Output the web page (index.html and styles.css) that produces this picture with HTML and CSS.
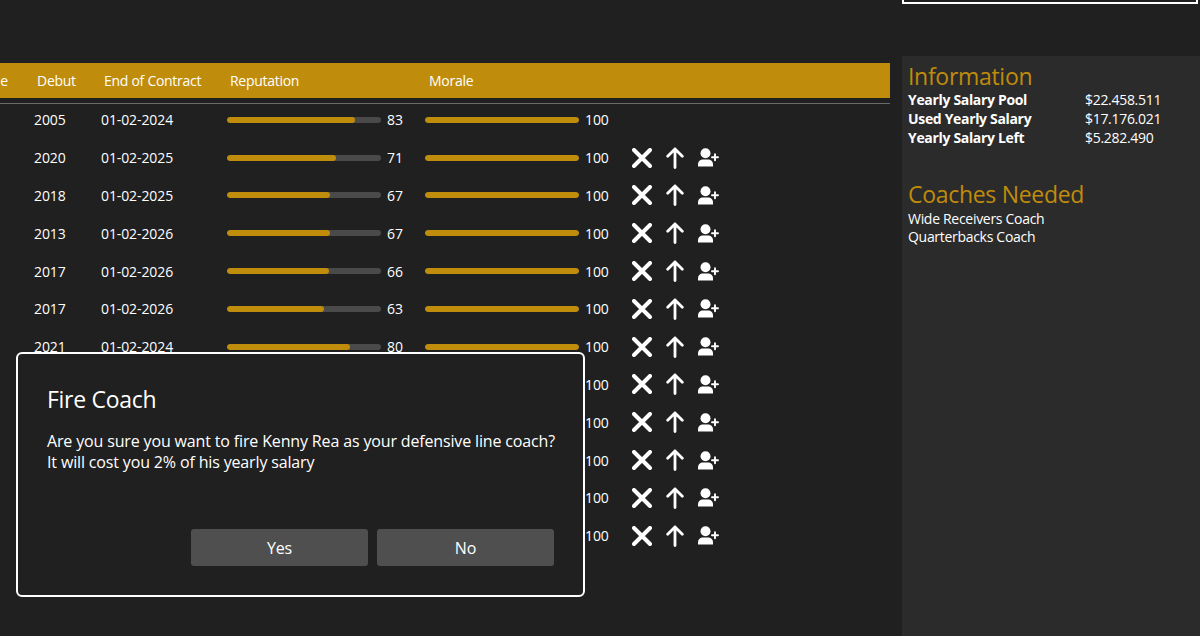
FILE: index.html
```html
<!DOCTYPE html>
<html lang="en">
<head>
<meta charset="utf-8">
<title>Coaches</title>
<link rel="stylesheet" href="styles.css">
</head>
<body>
<svg class="defs" width="0" height="0" aria-hidden="true">
  <symbol id="i-x" viewBox="0 0 20 20"><path d="M2 2 18 18M18 2 2 18" fill="none" stroke="#fff" stroke-width="4" stroke-linecap="round"/></symbol>
  <symbol id="i-up" viewBox="0 0 18 22"><path d="M9 20.500V2M1.700 9.300 9 2l7.300 7.300" fill="none" stroke="#fff" stroke-width="2.800" stroke-linecap="round" stroke-linejoin="round"/></symbol>
  <symbol id="i-add" viewBox="0 0 21 19"><circle cx="7.500" cy="5.200" r="5" fill="#fff"/><path d="M0 18.600v-2.200C0 13.400 2.400 11.600 5 11.600h5c2.600 0 5 1.800 5 4.800v2.200z" fill="#fff"/><path d="M17 6.200v6M14 9.200h6" stroke="#fff" stroke-width="1.900" stroke-linecap="round"/></symbol>
</svg>
<div class="app">
  <main class="main">
    <div class="head">
      <span class="cut">le</span><span>Debut</span><span>End of Contract</span><span>Reputation</span><span>Morale</span>
    </div>
    <div class="rule"></div>
    <div class="rows">
      <div class="row"><span>2005</span><span>01-02-2024</span><div class="meter"><div class="track"><div class="fill" style="width:83%"></div></div><span>83</span></div><div class="meter"><div class="track"><div class="fill" style="width:100%"></div></div><span>100</span></div></div>
      <div class="row"><span>2020</span><span>01-02-2025</span><div class="meter"><div class="track"><div class="fill" style="width:71%"></div></div><span>71</span></div><div class="meter"><div class="track"><div class="fill" style="width:100%"></div></div><span>100</span></div><div class="acts"><svg class="ix"><use href="#i-x"/></svg><svg class="iu"><use href="#i-up"/></svg><svg class="ia"><use href="#i-add"/></svg></div></div>
      <div class="row"><span>2018</span><span>01-02-2025</span><div class="meter"><div class="track"><div class="fill" style="width:67%"></div></div><span>67</span></div><div class="meter"><div class="track"><div class="fill" style="width:100%"></div></div><span>100</span></div><div class="acts"><svg class="ix"><use href="#i-x"/></svg><svg class="iu"><use href="#i-up"/></svg><svg class="ia"><use href="#i-add"/></svg></div></div>
      <div class="row"><span>2013</span><span>01-02-2026</span><div class="meter"><div class="track"><div class="fill" style="width:67%"></div></div><span>67</span></div><div class="meter"><div class="track"><div class="fill" style="width:100%"></div></div><span>100</span></div><div class="acts"><svg class="ix"><use href="#i-x"/></svg><svg class="iu"><use href="#i-up"/></svg><svg class="ia"><use href="#i-add"/></svg></div></div>
      <div class="row"><span>2017</span><span>01-02-2026</span><div class="meter"><div class="track"><div class="fill" style="width:66%"></div></div><span>66</span></div><div class="meter"><div class="track"><div class="fill" style="width:100%"></div></div><span>100</span></div><div class="acts"><svg class="ix"><use href="#i-x"/></svg><svg class="iu"><use href="#i-up"/></svg><svg class="ia"><use href="#i-add"/></svg></div></div>
      <div class="row"><span>2017</span><span>01-02-2026</span><div class="meter"><div class="track"><div class="fill" style="width:63%"></div></div><span>63</span></div><div class="meter"><div class="track"><div class="fill" style="width:100%"></div></div><span>100</span></div><div class="acts"><svg class="ix"><use href="#i-x"/></svg><svg class="iu"><use href="#i-up"/></svg><svg class="ia"><use href="#i-add"/></svg></div></div>
      <div class="row"><span>2021</span><span>01-02-2024</span><div class="meter"><div class="track"><div class="fill" style="width:80%"></div></div><span>80</span></div><div class="meter"><div class="track"><div class="fill" style="width:100%"></div></div><span>100</span></div><div class="acts"><svg class="ix"><use href="#i-x"/></svg><svg class="iu"><use href="#i-up"/></svg><svg class="ia"><use href="#i-add"/></svg></div></div>
      <div class="row"><span></span><span></span><span></span><div class="meter"><div class="track"><div class="fill" style="width:100%"></div></div><span>100</span></div><div class="acts"><svg class="ix"><use href="#i-x"/></svg><svg class="iu"><use href="#i-up"/></svg><svg class="ia"><use href="#i-add"/></svg></div></div>
      <div class="row"><span></span><span></span><span></span><div class="meter"><div class="track"><div class="fill" style="width:100%"></div></div><span>100</span></div><div class="acts"><svg class="ix"><use href="#i-x"/></svg><svg class="iu"><use href="#i-up"/></svg><svg class="ia"><use href="#i-add"/></svg></div></div>
      <div class="row"><span></span><span></span><span></span><div class="meter"><div class="track"><div class="fill" style="width:100%"></div></div><span>100</span></div><div class="acts"><svg class="ix"><use href="#i-x"/></svg><svg class="iu"><use href="#i-up"/></svg><svg class="ia"><use href="#i-add"/></svg></div></div>
      <div class="row"><span></span><span></span><span></span><div class="meter"><div class="track"><div class="fill" style="width:100%"></div></div><span>100</span></div><div class="acts"><svg class="ix"><use href="#i-x"/></svg><svg class="iu"><use href="#i-up"/></svg><svg class="ia"><use href="#i-add"/></svg></div></div>
      <div class="row"><span></span><span></span><span></span><div class="meter"><div class="track"><div class="fill" style="width:100%"></div></div><span>100</span></div><div class="acts"><svg class="ix"><use href="#i-x"/></svg><svg class="iu"><use href="#i-up"/></svg><svg class="ia"><use href="#i-add"/></svg></div></div>
    </div>
  </main>
  <aside class="side">
    <div class="topbox"></div>
    <div class="panel">
      <h2 class="title">Information</h2>
      <dl class="stats">
        <dt>Yearly Salary Pool</dt><dd>$22.458.511</dd>
        <dt>Used Yearly Salary</dt><dd>$17.176.021</dd>
        <dt>Yearly Salary Left</dt><dd>$5.282.490</dd>
      </dl>
      <h2 class="title second">Coaches Needed</h2>
      <ul class="needs">
        <li>Wide Receivers Coach</li>
        <li>Quarterbacks Coach</li>
      </ul>
    </div>
  </aside>
</div>
<section class="dialog">
  <h1 class="dlg-title">Fire Coach</h1>
  <p class="dlg-text">Are you sure you want to fire Kenny Rea as your defensive line coach?<br>It will cost you 2% of his yearly salary</p>
  <div class="dlg-btns">
    <button class="btn">Yes</button>
    <button class="btn">No</button>
  </div>
</section>
</body>
</html>
```
FILE: styles.css
```css
* { box-sizing: border-box; }
html, body { margin: 0; height: 636px; overflow: hidden; }
body {
  background: #202020;
  color: #fff;
  font-family: "Open Sans", "Noto Sans", sans-serif;
  font-size: 14px;
  position: relative;
}
.defs { position: absolute; }
.app { display: flex; height: 636px; }
.main { width: 890px; margin-right: 12px; padding-top: 63px; flex: none; overflow: hidden; }
.head {
  height: 35px;
  background: #c08c0c;
  display: grid;
  grid-template-columns: 37px 67px 126px 199px 1fr;
  align-items: center;
  font-size: 14px;
  letter-spacing: -0.28px;
}
.cut { margin-left: -3px; }
.rule { height: 1px; margin-top: 5px; background: #6a6a6a; }
.rows { padding-left: 34px; }
.row {
  height: 37.8px;
  padding-bottom: 6px;
  display: grid;
  grid-template-columns: 67px 126px 198px 207px 1fr;
  align-items: center;
  font-size: 14px;
  letter-spacing: -0.1px;
}
.meter { display: flex; align-items: center; gap: 6px; }
.track { width: 154px; height: 6px; border-radius: 3px; background: #4a4a4a; overflow: hidden; flex: none; }
.fill { height: 100%; border-radius: 3px; background: #c08c0c; }
.acts { display: flex; align-items: center; }
.ix { width: 20px; height: 20px; margin-right: 14px; }
.iu { width: 18px; height: 22px; margin-right: 14px; }
.ia { width: 21px; height: 19px; }
.side { flex: 1; min-width: 0; }
.topbox { height: 4px; margin-right: 2px; border: 2px solid #fff; border-top: 0; background: #202020; }
.panel { margin-top: 52px; height: 580px; background: #2b2b2b; padding: 5px 6px 0; }
.title { margin: 0; font-size: 23px; font-weight: 400; line-height: 30px; color: #c08c0c; letter-spacing: -0.3px; }
.second { margin-top: 32px; }
.stats { margin: -1px 0 0; display: grid; grid-template-columns: 177px 1fr; grid-auto-rows: 19px; line-height: 19px; font-size: 14px; letter-spacing: -0.3px; }
.stats dt { font-weight: 700; letter-spacing: -0.33px; }
.stats dd { margin: 0; }
.needs { margin: 1px 0 0; padding: 0; list-style: none; line-height: 18px; font-size: 14px; letter-spacing: -0.3px; }
.dialog {
  position: absolute;
  left: 16px;
  top: 352px;
  width: 569px;
  height: 245px;
  background: #202020;
  border: 2px solid #fff;
  border-radius: 6px;
  padding: 27px 29px 0;
}
.dlg-title { margin: 0; font-size: 23px; font-weight: 400; line-height: 36px; letter-spacing: -0.3px; }
.dlg-text { margin: 14px 0 0; font-size: 16px; line-height: 21px; letter-spacing: -0.15px; white-space: nowrap; }
.dlg-btns { display: flex; gap: 9.2px; margin: 56px 0 0 144px; }
.btn {
  width: 177.4px;
  height: 37px;
  border: 0;
  border-radius: 3px;
  background: #4f4f4f;
  color: #fff;
  font: inherit;
  font-size: 16px;
  letter-spacing: -0.15px;
}
```
